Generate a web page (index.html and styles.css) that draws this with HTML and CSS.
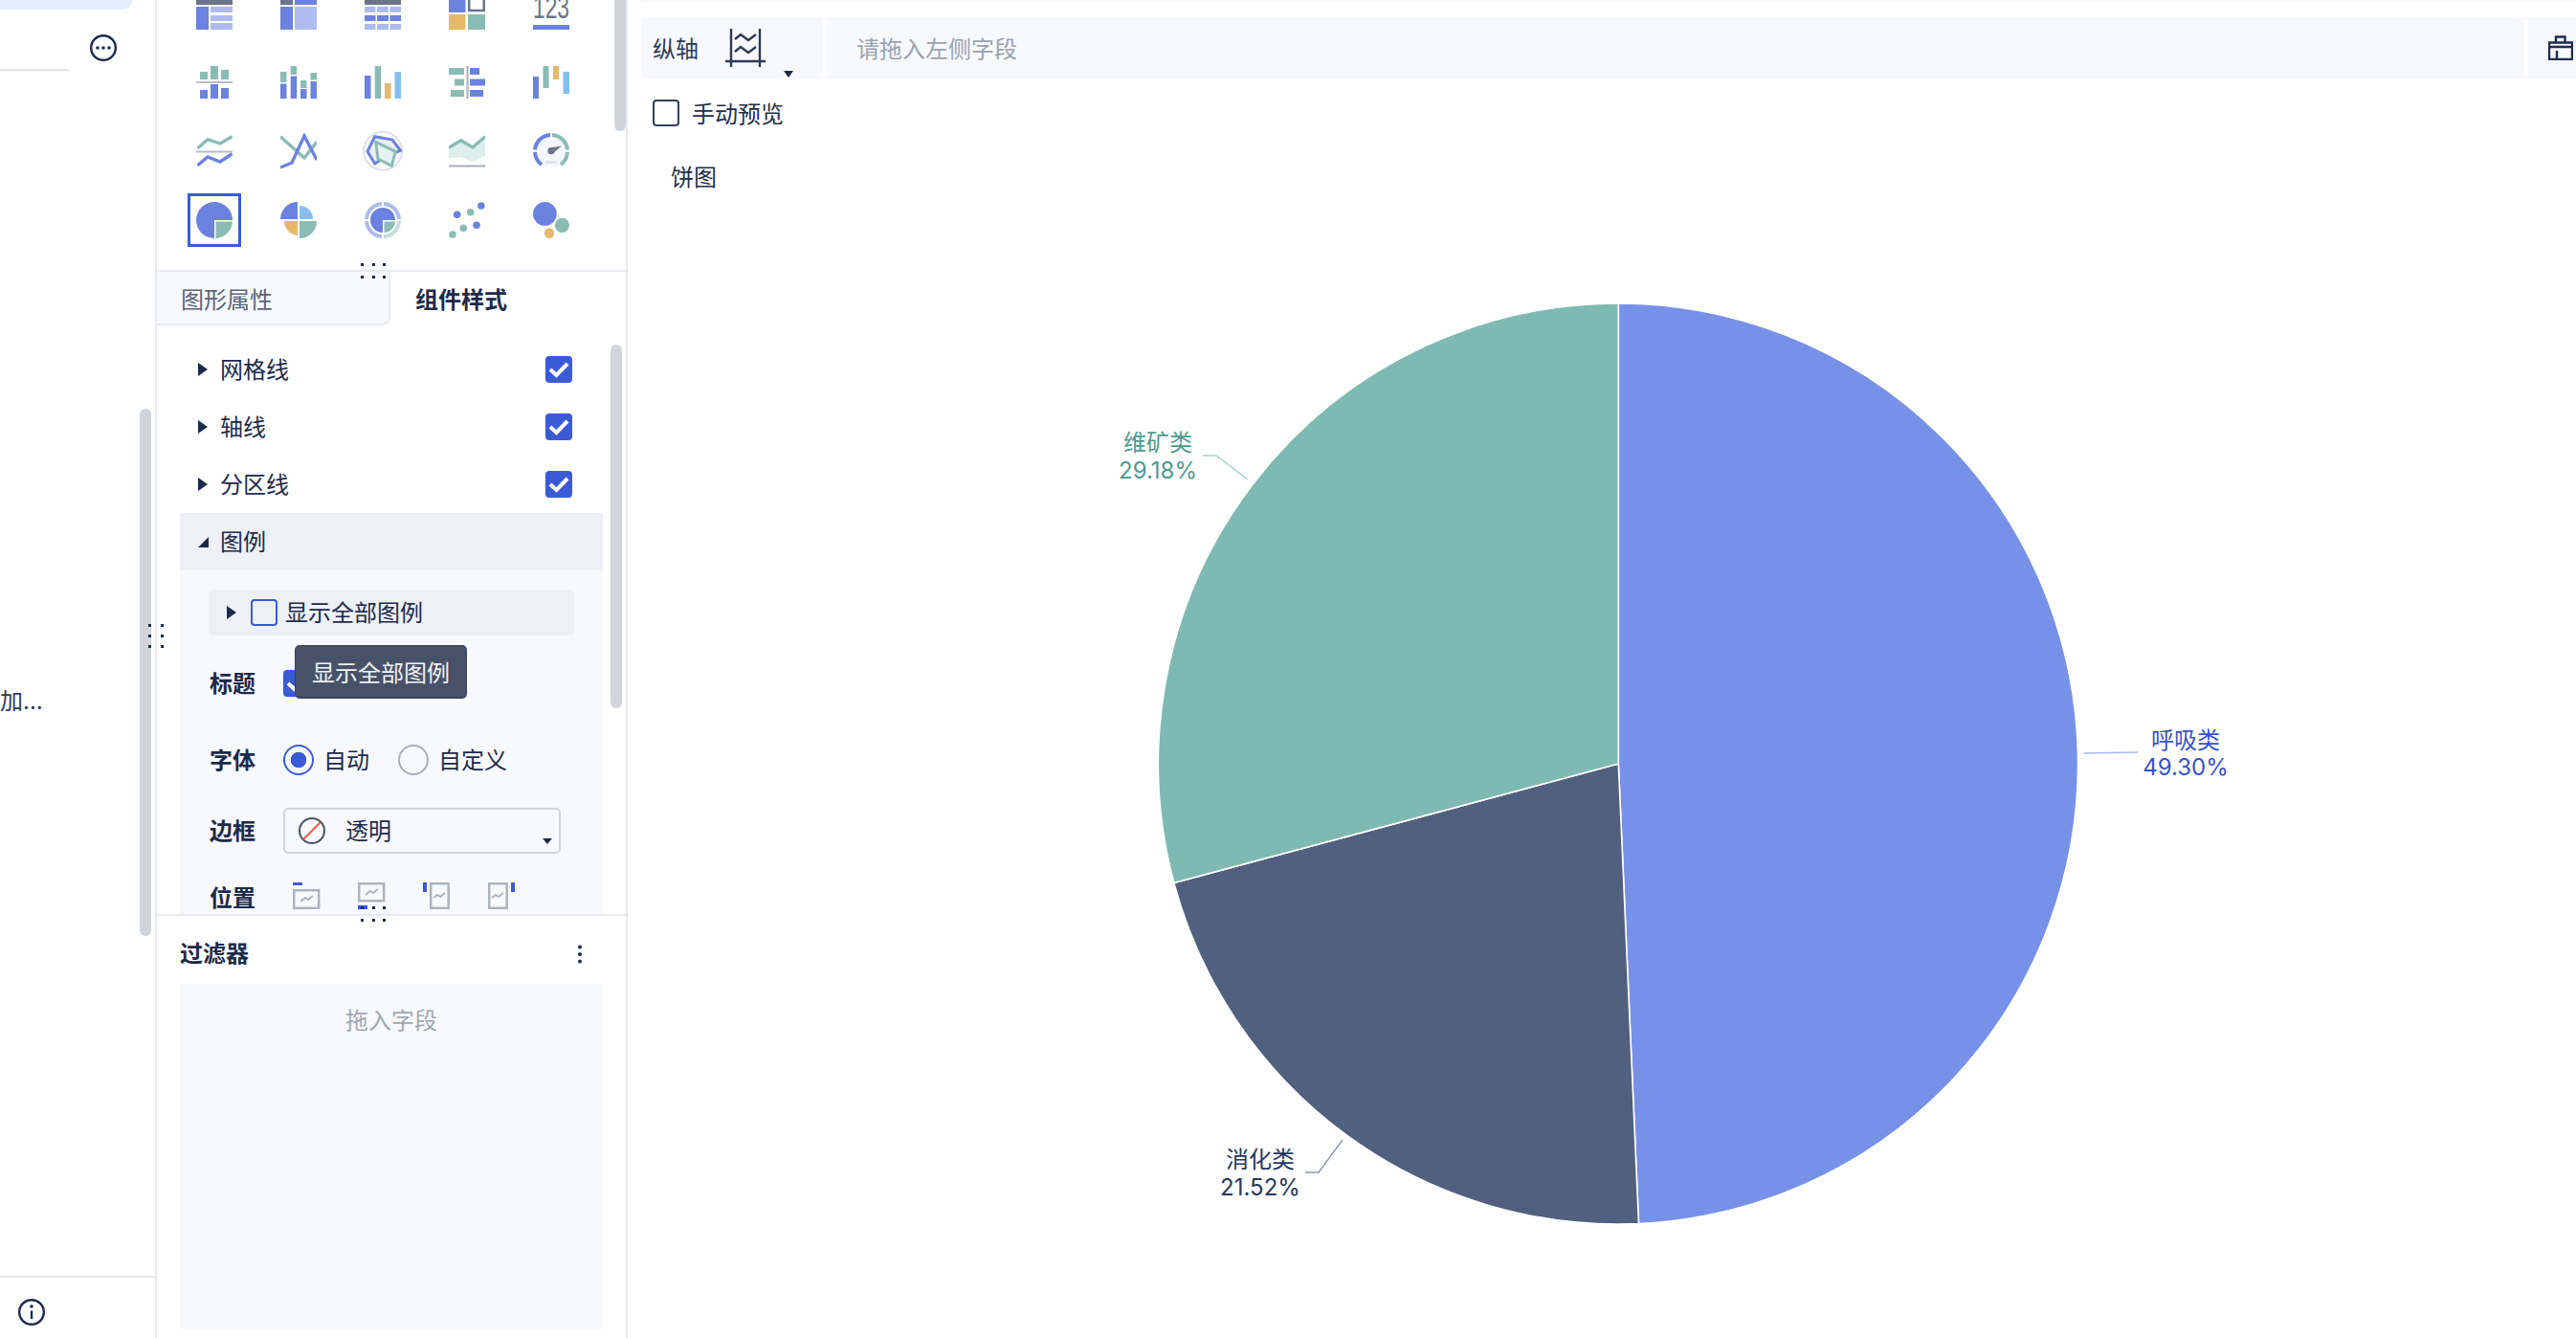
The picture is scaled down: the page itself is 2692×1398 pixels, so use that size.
FILE: index.html
```html
<!DOCTYPE html>
<html lang="zh">
<head>
<meta charset="utf-8">
<title>饼图</title>
<link rel="stylesheet" href="styles.css">
</head>
<body>
<div class="app">
  <aside class="side">
    <div class="tile"></div>
    <div class="side-head">
      <div class="side-input"></div>
      <svg class="more" width="28" height="28" viewBox="0 0 28 28"><circle cx="14" cy="14" r="12.8" class="ln"/><circle cx="8" cy="14" r="1.8" class="dot"/><circle cx="14" cy="14" r="1.8" class="dot"/><circle cx="20" cy="14" r="1.8" class="dot"/></svg>
    </div>
    <div class="side-trunc">加…</div>
    <div class="side-foot">
      <svg width="28" height="28" viewBox="0 0 28 28"><circle cx="14" cy="14" r="12.8" class="ln"/><circle cx="14" cy="8" r="1.8" class="dot"/><path d="M14 12.5V21" class="ln"/></svg>
    </div>
    <div class="scroll side-scroll"></div>
  </aside>

  <section class="panel">
    <div class="picker">
      <div class="picker-grid">
        <div class="cell"><svg width="38" height="38" viewBox="0 0 38 38"><rect width="38" height="10" class="g"/><rect y="12" width="13" height="24" class="b"/><rect x="15" y="12" width="23" height="6" class="l"/><rect x="15" y="21" width="23" height="6" class="l"/><rect x="15" y="29" width="23" height="7" class="l"/></svg></div>
        <div class="cell"><svg width="38" height="38" viewBox="0 0 38 38"><rect width="13" height="10" class="g"/><rect x="15" width="23" height="10" class="b"/><rect y="12" width="13" height="24" class="b"/><rect x="15" y="12" width="23" height="24" class="l"/></svg></div>
        <div class="cell"><svg width="38" height="38" viewBox="0 0 38 38"><rect width="38" height="10" class="g"/><rect y="12" width="11.5" height="6" class="l"/><rect x="13" y="12" width="12" height="6" class="l"/><rect x="26.5" y="12" width="11.5" height="6" class="l"/><rect y="21" width="11.5" height="6" class="b"/><rect x="13" y="21" width="12" height="6" class="b"/><rect x="26.5" y="21" width="11.5" height="6" class="b"/><rect y="30" width="11.5" height="6" class="l"/><rect x="13" y="30" width="12" height="6" class="l"/><rect x="26.5" y="30" width="11.5" height="6" class="l"/></svg></div>
        <div class="cell"><svg width="38" height="38" viewBox="0 0 38 38"><rect width="17.5" height="18" class="b"/><rect x="21.2" y="-2" width="15.5" height="18" class="frame-g"/><rect y="20" width="17.5" height="16" class="o"/><rect x="20" y="20" width="18" height="16" class="t"/></svg></div>
        <div class="cell"><svg width="38" height="38" viewBox="0 0 38 38"><text x="0" y="24" textLength="38" lengthAdjust="spacingAndGlyphs" class="num">123</text><rect y="31" width="38" height="5" class="b"/></svg></div>

        <div class="cell"><svg width="38" height="38" viewBox="0 0 38 38"><rect x="4" y="8" width="8" height="8" class="t"/><rect x="15" y="2" width="8" height="14" class="t"/><rect x="26" y="6" width="8" height="10" class="t"/><rect y="18" width="38" height="2" class="s"/><rect x="4" y="27" width="8" height="9" class="b"/><rect x="15" y="21" width="8" height="15" class="b"/><rect x="26" y="25" width="8" height="11" class="b"/></svg></div>
        <div class="cell"><svg width="38" height="38" viewBox="0 0 38 38"><rect y="8" width="6.5" height="11" class="t"/><rect y="20.5" width="6.5" height="15.5" class="b"/><rect x="10.7" y="2" width="6.5" height="9" class="t"/><rect x="10.7" y="12.5" width="6.5" height="23.5" class="b"/><rect x="21" y="17" width="6.5" height="8" class="t"/><rect x="21" y="26" width="6.5" height="10" class="b"/><rect x="31.5" y="9" width="6.5" height="7.5" class="t"/><rect x="31.5" y="18" width="6.5" height="18" class="b"/></svg></div>
        <div class="cell"><svg width="38" height="38" viewBox="0 0 38 38"><rect y="12" width="6.5" height="24" class="b"/><rect x="10.7" y="2" width="6.5" height="34" class="t"/><rect x="21" y="20" width="6.5" height="16" class="o"/><rect x="31.5" y="8" width="6.5" height="28" class="k"/></svg></div>
        <div class="cell"><svg width="38" height="38" viewBox="0 0 38 38"><rect x="18.5" y="2" width="2" height="34" class="s2"/><rect y="4" width="16" height="7" class="t"/><rect x="6" y="15.5" width="10" height="7" class="t"/><rect x="2" y="27" width="14" height="7" class="t"/><rect x="22" y="4" width="10" height="7" class="b"/><rect x="22" y="15.5" width="16" height="7" class="b"/><rect x="22" y="27" width="14" height="7" class="b"/></svg></div>
        <div class="cell"><svg width="38" height="38" viewBox="0 0 38 38"><rect y="13" width="6" height="23" class="b"/><rect x="10.5" y="2" width="6" height="23" class="t"/><rect x="21" y="2" width="6" height="14" class="o"/><rect x="31.5" y="8" width="6.5" height="23" class="k"/></svg></div>

        <div class="cell"><svg width="38" height="38" viewBox="0 0 38 38"><polyline points="1.5,16 12,6.7 25,11 37.5,3.7" class="line-t"/><rect y="18.5" width="38" height="2" class="s"/><polyline points="1.5,33.7 12,25 25,30 37.5,21.7" class="line-b"/></svg></div>
        <div class="cell"><svg width="38" height="38" viewBox="0 0 38 38"><polyline points="0,3.7 25,26 38,9.3" class="line-t"/><polyline points="0,36 12,31 25,3 38,28" class="line-b"/></svg></div>
        <div class="cell"><svg class="spill" width="38" height="38" viewBox="0 0 38 38"><circle cx="19" cy="18.7" r="20" class="ring"/><polygon points="10.7,3.7 29,7 37.5,18.3 22.3,24.3 10.7,32 3,19.3" class="poly-b"/><polygon points="11.7,9.3 32.3,19.3 28.3,34.3 14,27" class="poly-t"/></svg></div>
        <div class="cell"><svg width="38" height="38" viewBox="0 0 38 38"><polygon points="0,15.3 12.7,7.7 25,15 38,3.7 38,24 25,30 12.7,25 0,26" class="area"/><polyline points="0,15.3 12.7,7.7 25,15 38,3.7" class="line-t"/><rect y="33.5" width="38" height="2" class="s2"/></svg></div>
        <div class="cell"><svg width="38" height="38" viewBox="0 0 38 38"><circle cx="19" cy="18.7" r="17.5" class="gauge-bg"/><path d="M2 17.5A17 17 0 0 1 18 2" class="arc-b"/><path d="M20 2A17 17 0 0 1 36 17.5" class="arc-t"/><path d="M2 20A17 17 0 0 0 9 33" class="arc-b"/><path d="M36 20A17 17 0 0 1 29 33" class="arc-t"/><circle cx="19" cy="18.7" r="3.6" class="g"/><polygon points="18,15.5 30,13.5 21,21" class="g"/><rect x="13" y="29" width="12" height="3" class="s3"/></svg></div>

        <div class="cell selected"><svg width="38" height="38" viewBox="0 0 38 38"><path d="M19 19H38A19 19 0 1 0 19 38Z" class="b"/><path d="M20.5 20.5H38A18.5 18.5 0 0 1 20.5 38Z" class="t"/></svg></div>
        <div class="cell"><svg width="38" height="38" viewBox="0 0 38 38"><path d="M18 18H0A18 18 0 0 1 18 0Z" class="b"/><path d="M20 18V4A14 14 0 0 1 34 18Z" class="k"/><path d="M18 20V35A15 15 0 0 1 4 20Z" class="o"/><path d="M20 20H38A18 18 0 0 1 20 38Z" class="t"/></svg></div>
        <div class="cell"><svg width="38" height="38" viewBox="0 0 38 38"><path d="M2 18A17 17 0 0 1 18 2" class="arc-l"/><path d="M20 2A17 17 0 0 1 36 18" class="arc-l"/><path d="M2 20A17 17 0 0 0 18 36" class="arc-l"/><path d="M20 36A17 17 0 0 0 36 20" class="arc-p"/><path d="M19 19H32A13 13 0 1 0 19 32Z" class="b"/><path d="M20.5 20.5H32A12 12 0 0 1 20.5 32Z" class="t"/></svg></div>
        <div class="cell"><svg width="38" height="38" viewBox="0 0 38 38"><circle cx="8.7" cy="13.3" r="3.8" class="b"/><circle cx="22.7" cy="10.7" r="3.8" class="t"/><circle cx="33.8" cy="4" r="3.8" class="b"/><circle cx="29" cy="24.3" r="3.8" class="b"/><circle cx="15.3" cy="27.3" r="3.8" class="t"/><circle cx="4" cy="34" r="3.8" class="t"/></svg></div>
        <div class="cell"><svg width="38" height="38" viewBox="0 0 38 38"><circle cx="12.4" cy="12.4" r="12.4" class="b"/><circle cx="30.4" cy="24.3" r="7.6" class="t"/><circle cx="17" cy="32.8" r="5.2" class="o"/></svg></div>
      </div>
      <div class="scroll picker-scroll"></div>
    </div>

    <div class="style-part">
      <div class="tabs">
        <div class="tab tab-off">图形属性</div>
        <div class="tab tab-on">组件样式</div>
      </div>
      <div class="tree">
        <div class="tree-row"><i class="tri"></i><span class="tree-name">网格线</span><span class="check"><svg width="22" height="18" viewBox="0 0 22 18"><path d="M2 9l6.500 6L20 3" class="tick"/></svg></span></div>
        <div class="tree-row"><i class="tri"></i><span class="tree-name">轴线</span><span class="check"><svg width="22" height="18" viewBox="0 0 22 18"><path d="M2 9l6.500 6L20 3" class="tick"/></svg></span></div>
        <div class="tree-row"><i class="tri"></i><span class="tree-name">分区线</span><span class="check"><svg width="22" height="18" viewBox="0 0 22 18"><path d="M2 9l6.500 6L20 3" class="tick"/></svg></span></div>
        <div class="tree-row tree-open"><i class="tri-open"></i><span class="tree-name">图例</span></div>
        <div class="legend">
          <div class="sub-row"><i class="tri"></i><span class="box-empty"></span><span class="lift">显示全部图例</span></div>
          <div class="form-row row-title"><span class="form-label lift">标题</span><span class="check"><svg width="22" height="18" viewBox="0 0 22 18"><path d="M2 9l6.500 6L20 3" class="tick"/></svg></span></div>
          <div class="form-row row-font"><span class="form-label lift">字体</span><span class="radio radio-on"></span><span class="radio-text lift">自动</span><span class="radio"></span><span class="radio-text lift">自定义</span></div>
          <div class="form-row row-border"><span class="form-label lift">边框</span>
            <div class="select"><svg width="28" height="28" viewBox="0 0 28 28"><circle cx="14" cy="14" r="13" class="no-ring"/><path d="M5 23L23 5" class="no-slash"/></svg><span class="select-text lift">透明</span><i class="caret"></i></div>
          </div>
          <div class="form-row row-pos"><span class="form-label">位置</span>
            <svg class="pos" width="30" height="28" viewBox="0 0 30 28"><rect width="10" height="3" class="bl"/><rect x="1.200" y="8.200" width="26" height="18.600" class="pos-f"/><polyline points="8,20 13,16 16,18 21,14" class="pos-z"/></svg>
            <svg class="pos" width="30" height="28" viewBox="0 0 30 28"><rect x="1.200" y="1.200" width="26" height="18" class="pos-f"/><polyline points="8,13 13,9 16,11 21,7" class="pos-z"/><rect y="24" width="10" height="4" class="bl"/></svg>
            <svg class="pos" width="30" height="28" viewBox="0 0 30 28"><rect width="4" height="10" class="bl"/><rect x="8.200" y="1.200" width="18.500" height="25.600" class="pos-f"/><polyline points="11,16 15,13 18,15 23,11" class="pos-z"/></svg>
            <svg class="pos" width="30" height="28" viewBox="0 0 30 28"><rect x="1.200" y="1.200" width="18.500" height="25.600" class="pos-f"/><polyline points="4,16 8,13 11,15 16,11" class="pos-z"/><rect x="24" width="4" height="10" class="bl"/></svg>
          </div>
        </div>
      </div>
      <div class="tip">显示全部图例</div>
      <div class="scroll style-scroll"></div>
    </div>

    <div class="filter">
      <div class="filter-head"><span class="filter-title">过滤器</span>
        <svg class="filter-more" width="6" height="20" viewBox="0 0 6 20"><circle cx="3" cy="2.500" r="2" class="dot"/><circle cx="3" cy="10" r="2" class="dot"/><circle cx="3" cy="17.500" r="2" class="dot"/></svg>
      </div>
      <div class="filter-drop">拖入字段</div>
    </div>
  </section>

  <main class="main">
    <div class="strip"></div>
    <div class="axis-bar">
      <div class="axis-label"><span class="lift-s">纵轴</span>
        <svg class="axis-icon" width="42" height="40" viewBox="0 0 42 40"><path d="M6 0V40M36 0V40M0 34H42" class="ax"/><polyline points="10,11 16,6 24,12 32,6" class="ax"/><polyline points="10,24 16,19 24,25 32,19" class="ax"/></svg>
        <i class="caret axis-caret"></i>
      </div>
      <div class="axis-sep"></div>
      <div class="axis-drop lift-s">请拖入左侧字段</div>
      <div class="axis-sep"></div>
      <div class="axis-end">
        <svg width="26" height="26" viewBox="0 0 26 26"><path d="M1 7.500H25V25H1ZM8 7.500V1.500H17.500V7.500M1 12H25M9 16V25" class="tool"/></svg>
      </div>
    </div>
    <label class="manual"><span class="manual-box"></span><span class="lift-s">手动预览</span></label>
    <div class="chart-title">饼图</div>
    <svg class="pie" width="2036" height="1194" viewBox="656 204 2036 1194">
      <path d="M1691.300 798V317A481 481 0 0 1 1712.500 1278.500Z" class="sl-blue"/>
      <path d="M1691.300 798L1712.500 1278.500A481 481 0 0 1 1226.800 922.500Z" class="sl-navy"/>
      <path d="M1691.300 798L1226.800 922.500A481 481 0 0 1 1691.300 317Z" class="sl-teal"/>
      <polyline points="2178,787 2234,786" class="lead lead-blue"/>
      <polyline points="1257,476 1271,476 1304,501" class="lead lead-teal"/>
      <polyline points="1364,1225 1378,1225 1403,1191" class="lead lead-navy"/>
      <text x="2284" y="782" class="lab lab-blue">呼吸类</text>
      <text x="2284" y="810" class="lab lab-blue">49.30%</text>
      <text x="1210" y="471" class="lab lab-teal">维矿类</text>
      <text x="1210" y="500" class="lab lab-teal">29.18%</text>
      <text x="1317" y="1220" class="lab lab-navy">消化类</text>
      <text x="1317" y="1249" class="lab lab-navy">21.52%</text>
    </svg>
  </main>

  <svg class="grip grip-a" width="26" height="16" viewBox="0 0 26 16"><path d="M0 0h3v3H0zM12 0h3v3h-3zM23 0h3v3h-3zM0 13h3v3H0zM12 13h3v3h-3zM23 13h3v3h-3z" class="dot"/></svg>
  <svg class="grip grip-b" width="26" height="16" viewBox="0 0 26 16"><path d="M0 0h3v3H0zM12 0h3v3h-3zM23 0h3v3h-3zM0 13h3v3H0zM12 13h3v3h-3zM23 13h3v3h-3z" class="dot"/></svg>
  <svg class="grip grip-c" width="16" height="25" viewBox="0 0 16 25"><path d="M0 0h3v3H0zM13 0h3v3h-3zM0 11h3v3H0zM13 11h3v3h-3zM0 22h3v3H0zM13 22h3v3h-3z" class="dot"/></svg>
</div>
</body>
</html>
```
FILE: styles.css
```css
* { box-sizing: border-box; }
html, body { margin: 0; padding: 0; background: #fff; }
body { font-family: "Inter", "Noto Sans CJK SC", sans-serif; font-size: 24px; color: #1c2a4a; }
i { display: block; }
svg { display: block; flex: none; }
.spill { overflow: visible; }
.lift { padding-bottom: 3px; }
.lift-s { padding-bottom: 2px; }

.app { position: relative; display: flex; width: 2692px; height: 1398px; overflow: hidden; }

/* left tree column */
.side { position: relative; display: flex; flex-direction: column; width: 164px; flex: none; border-right: 2px solid #e9eaf0; }
.tile { width: 138px; height: 10px; background: #e6edfc; border-bottom-right-radius: 14px; }
.side-head { display: flex; align-items: flex-start; height: 64px; }
.side-input { width: 72px; height: 64px; border-bottom: 2px solid #e2e3e9; }
.more { margin: 26px 0 0 22px; }
.side-trunc { margin-top: 641px; line-height: 36px; color: #2d3a56; }
.side-foot { margin-top: auto; height: 65px; border-top: 2px solid #e9eaf0; padding: 22px 0 0 19px; }
.ln { fill: none; stroke: #1c2a4a; stroke-width: 2.4; }
.dot { fill: #1c2a4a; }

.scroll { position: absolute; width: 12px; background: #d1d5db; border-radius: 6px; }
.side-scroll { left: 146px; top: 427px; height: 551px; }

/* middle panel */
.panel { position: relative; display: flex; flex-direction: column; width: 492px; flex: none; border-right: 2px solid #e9eaf0; }
.picker { position: relative; height: 284px; flex: none; border-bottom: 2px solid #e9eaf0; overflow: hidden; }
.picker-grid { display: grid; grid-template-columns: repeat(5, 56px); grid-auto-rows: 56px; gap: 16px 32px; margin: -14px 0 0 32px; }
.cell { display: flex; align-items: center; justify-content: center; }
.selected { border: 3px solid #3b5bd6; }
.picker-scroll { left: 478px; top: -20px; height: 157px; }

.g { fill: #6b7489; } .b { fill: #6b82de; } .l { fill: #adbbee; } .t { fill: #8abcb3; }
.o { fill: #e6b86c; } .k { fill: #86bfee; } .s { fill: #b8bcc9; } .s2 { fill: #a9aebb; } .s3 { fill: #e1e3ea; }
.frame-g { fill: none; stroke: #6b7489; stroke-width: 2.5; }
.num { font-family: "Liberation Sans", sans-serif; font-size: 33px; fill: #6b7489; }
.line-t { fill: none; stroke: #8abcb3; stroke-width: 3.4; }
.line-b { fill: none; stroke: #6b82de; stroke-width: 3.4; }
.ring { fill: #fafbfd; stroke: #d8dbe3; stroke-width: 1.6; }
.poly-b { fill: #eceef3; stroke: #6b82de; stroke-width: 3; }
.poly-t { fill: #e6f2ef; stroke: #8abcb3; stroke-width: 3; }
.area { fill: #dcefeb; }
.gauge-bg { fill: #f5f6fa; }
.arc-b, .arc-t, .arc-l, .arc-p { fill: none; stroke-width: 4; }
.arc-b { stroke: #6b82de; } .arc-t { stroke: #8abcb3; } .arc-l { stroke: #adbbee; } .arc-p { stroke: #c3dcd8; }

.style-part { position: relative; height: 671px; flex: none; overflow: hidden; }
.tabs { display: flex; height: 56px; }
.tab { display: flex; align-items: center; line-height: 1; padding-top: 5px; }
.tab-off { width: 244px; padding-left: 25px; color: #5a6478; background: #f8f9fd; border-right: 2px solid #e9eaf0; border-bottom: 2px solid #e9eaf0; border-bottom-right-radius: 8px; }
.tab-on { padding-left: 26px; font-weight: 700; padding-top: 3px; }
.tree { padding: 16px 24px 0; }
.tree-row { display: flex; align-items: center; height: 60px; padding-left: 19px; }
.tree-open { background: #edf0f5; border-radius: 2px; }
.tri { width: 0; height: 0; border-style: solid; border-width: 7px 0 7px 10px; border-color: transparent transparent transparent #1c2a4a; }
.tri-open { width: 0; height: 0; border-style: solid; border-width: 0 0 11px 11px; border-color: transparent transparent #1c2a4a transparent; }
.tree-name { margin-left: 13px; padding-bottom: 3px; }
.tree-open .tree-name { margin-left: 12px; }
.check { display: flex; align-items: center; justify-content: center; width: 28px; height: 28px; margin-left: auto; margin-right: 32px; background: #3b5bd6; border-radius: 4px; }
.tick { fill: none; stroke: #fff; stroke-width: 4; }

.legend { height: 360px; padding: 20px 0 0 31px; background: #f8f9fd; overflow: hidden; }
.sub-row { display: flex; align-items: center; width: 382px; height: 48px; margin-left: -1px; padding-left: 19px; background: #edf0f5; border-radius: 4px; }
.box-empty { width: 28px; height: 28px; margin: 0 8px 0 15px; border: 2px solid #3b5bd6; border-radius: 4px; }
.form-row { display: flex; align-items: center; }
.form-label { width: 77px; flex: none; font-weight: 700; }
.row-title { height: 28px; margin-top: 36px; }
.row-title .check { margin: 0; }
.row-font { height: 32px; margin-top: 50px; }
.radio { width: 32px; height: 32px; flex: none; border: 2px solid #a9aebb; border-radius: 50%; }
.radio-on { display: flex; border-color: #3b5bd6; background: radial-gradient(circle, #3b5bd6 0 8px, transparent 8.500px); }
.radio-text { margin: 0 0 0 10px; width: 78px; color: #1c2a4a; }
.row-border { height: 48px; margin-top: 34px; }
.select { position: relative; display: flex; align-items: center; width: 290px; height: 48px; padding-left: 14px; border: 2px solid #d1d5db; border-radius: 5px; }
.no-ring { fill: none; stroke: #4a5468; stroke-width: 2; }
.no-slash { fill: none; stroke: #ea5a4f; stroke-width: 2; }
.select-text { margin-left: 21px; }
.caret { width: 0; height: 0; border-style: solid; border-width: 6px 5px 0; border-color: #1c2a4a transparent transparent; }
.select .caret { position: absolute; right: 7px; bottom: 8px; }
.row-pos { height: 28px; margin-top: 30px; }
.pos { margin-right: 38px; }
.row-pos .form-label + .pos { margin-left: 10px; }
.pos-f { fill: none; stroke: #adb3c0; stroke-width: 2.5; }
.pos-z { fill: none; stroke: #adb3c0; stroke-width: 2; }
.bl { fill: #3b5bd6; }

.tip { position: absolute; left: 144px; top: 390px; width: 180px; height: 56px; padding-top: 11px; text-align: center; line-height: 36px; color: #f1f3f7; background: #475269; border: 1px solid #3a4459; border-bottom-width: 2px; border-radius: 5px; }
.style-scroll { left: 474px; top: 76px; height: 380px; }

.filter { flex: 1; border-top: 2px solid #e9eaf0; padding: 0 24px; }
.filter-head { display: flex; align-items: center; justify-content: space-between; height: 71px; padding-right: 21px; }
.filter-title { font-weight: 700; padding-top: 3px; }
.filter-more { margin-top: 9px; }
.filter-drop { height: 361px; padding-top: 21px; text-align: center; line-height: 36px; color: #a0a7b4; background: #f8f9fd; }

/* main */
.main { flex: 1; min-width: 0; display: flex; flex-direction: column; }
.strip { height: 2px; margin-left: 14px; background: #f8f9fd; flex: none; }
.axis-bar { display: flex; align-items: center; height: 64px; margin: 16px 0 0 14px; background: #f8f9fd; flex: none; }
.axis-label { position: relative; display: flex; align-items: center; width: 190px; height: 100%; padding-left: 12px; color: #2d3a56; flex: none; }
.axis-icon { margin-left: 28px; }
.ax { fill: none; stroke: #2d3a56; stroke-width: 2.4; }
.axis-caret { position: absolute; left: 149px; top: 56px; border-width: 7px 5px 0; }
.axis-sep { width: 4px; height: 60px; background: #fff; flex: none; }
.axis-drop { flex: 1; padding-left: 31px; color: #9aa2b1; }
.axis-end { width: 50px; padding-left: 21px; flex: none; }
.tool { fill: none; stroke: #1d2b4f; stroke-width: 2.400; }
.manual { display: flex; align-items: center; height: 28px; margin: 22px 0 0 26px; color: #222e48; flex: none; }
.manual-box { width: 28px; height: 28px; margin-right: 13px; border: 2px solid #33415c; border-radius: 4px; }
.chart-title { margin: 36px 0 0 45px; line-height: 36px; color: #222e48; flex: none; }
.pie { flex: none; }
.sl-blue, .sl-navy, .sl-teal { stroke: #fff; stroke-width: 1.6; }
.sl-blue { fill: #7891e8; } .sl-navy { fill: #51607e; } .sl-teal { fill: #7fbab2; }
.lead { fill: none; stroke-width: 1.4; }
.lead-blue { stroke: #a9b8ee; } .lead-teal { stroke: #a5cfc9; } .lead-navy { stroke: #8d97ad; }
.lab { font-size: 24px; text-anchor: middle; }
.lab-blue { fill: #3653c8; } .lab-teal { fill: #4f9a90; } .lab-navy { fill: #26375f; }

.grip { position: absolute; }
.grip-a { left: 377px; top: 275px; }
.grip-b { left: 377px; top: 947px; }
.grip-c { left: 155px; top: 652px; }
```
